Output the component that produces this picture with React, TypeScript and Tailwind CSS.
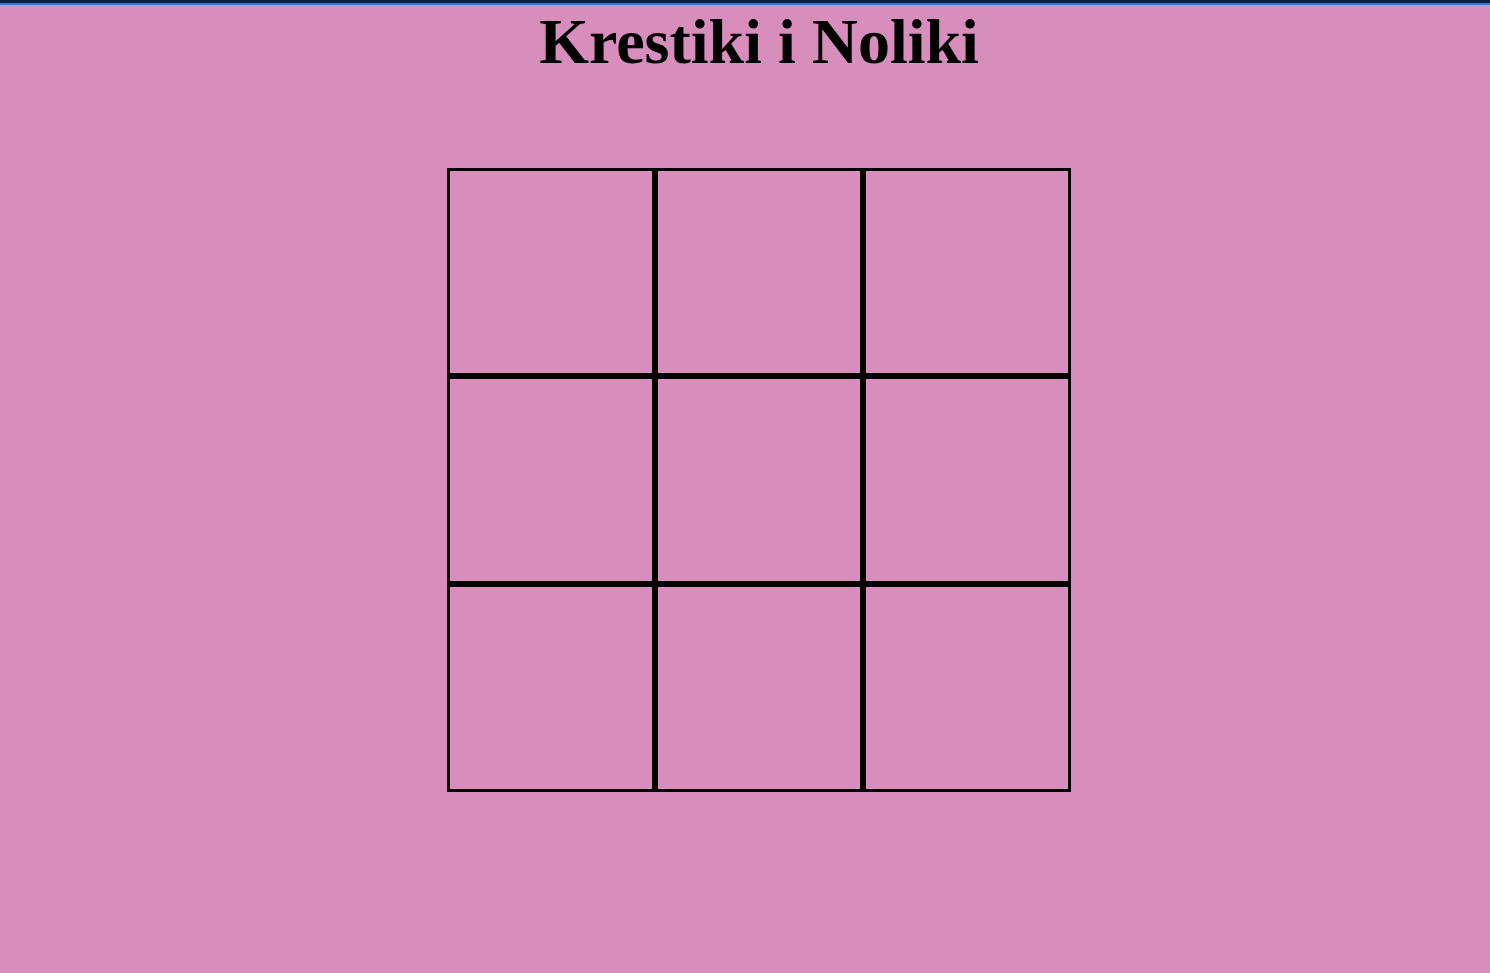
import React from "react";

export default function App() {
  const cells = Array.from({ length: 9 });
  return (
    <div className="min-h-[973px] w-full bg-[#d78ebc] flex flex-col" style={{ fontFamily: '"Liberation Serif", "Times New Roman", serif' }}>
      <div className="h-[3px] w-full bg-[#0a1f4f]" />
      <div className="h-[2px] w-full bg-[#3d6fd6]" />
      <div className="flex flex-col items-center pl-[28px]">
        <h1 className="m-0 text-[64px] font-bold leading-[74px] text-black">Krestiki i Noliki</h1>
        <div className="mt-[89px] grid grid-cols-[repeat(3,208px)] grid-rows-[repeat(3,208px)]">
          {cells.map((_, i) => (
            <div key={i} className="border-[3px] border-solid border-black" />
          ))}
        </div>
      </div>
    </div>
  );
}
